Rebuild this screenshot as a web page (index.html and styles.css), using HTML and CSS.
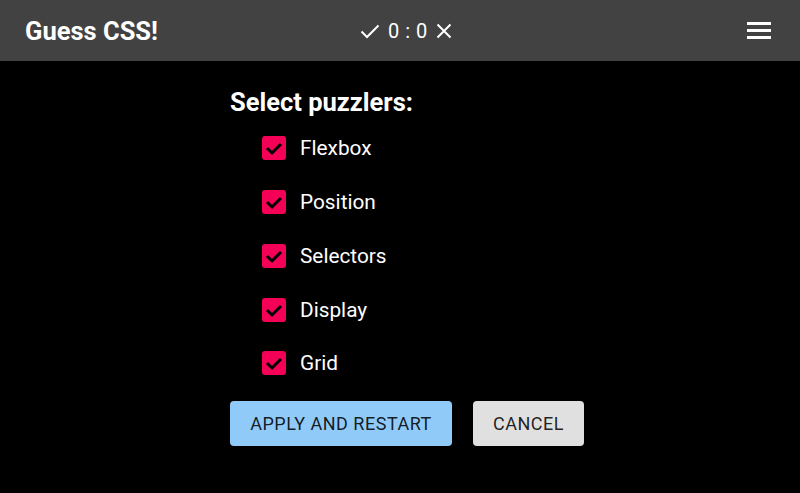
FILE: index.html
```html
<!DOCTYPE html>
<html>
<head>
<meta charset="utf-8">
<link rel="stylesheet" href="styles.css">
</head>
<body>
<header class="bar">
  <div class="title">Guess CSS!</div>
  <div class="score">
    <svg class="ico-check" width="20" height="16" viewBox="0 0 20 16"><path d="M1.5 8.5 L7 14 L18.5 2.5" fill="none" stroke="#fff" stroke-width="2"/></svg>
    <span class="score-text">0 : 0</span>
    <svg class="ico-x" width="16" height="16" viewBox="0 0 16 16"><path d="M1.5 1.5 L14.5 14.5 M14.5 1.5 L1.5 14.5" fill="none" stroke="#fff" stroke-width="2"/></svg>
  </div>
  <div class="menu">
    <span class="line"></span><span class="line"></span><span class="line"></span>
  </div>
</header>
<main class="content">
  <h2 class="heading">Select puzzlers:</h2>
  <ul class="list">
    <li class="item"><span class="box"><svg width="24" height="24" viewBox="0 0 24 24"><path d="M5 12 L10 17 L19 8" fill="none" stroke="#000" stroke-width="3"/></svg></span><span class="label">Flexbox</span></li>
    <li class="item"><span class="box"><svg width="24" height="24" viewBox="0 0 24 24"><path d="M5 12 L10 17 L19 8" fill="none" stroke="#000" stroke-width="3"/></svg></span><span class="label">Position</span></li>
    <li class="item"><span class="box"><svg width="24" height="24" viewBox="0 0 24 24"><path d="M5 12 L10 17 L19 8" fill="none" stroke="#000" stroke-width="3"/></svg></span><span class="label">Selectors</span></li>
    <li class="item"><span class="box"><svg width="24" height="24" viewBox="0 0 24 24"><path d="M5 12 L10 17 L19 8" fill="none" stroke="#000" stroke-width="3"/></svg></span><span class="label">Display</span></li>
    <li class="item"><span class="box"><svg width="24" height="24" viewBox="0 0 24 24"><path d="M5 12 L10 17 L19 8" fill="none" stroke="#000" stroke-width="3"/></svg></span><span class="label">Grid</span></li>
  </ul>
  <div class="actions">
    <button class="btn btn-primary">Apply and restart</button>
    <button class="btn btn-cancel">Cancel</button>
  </div>
</main>
</body>
</html>
```
FILE: styles.css
```css
html, body {
  margin: 0;
  padding: 0;
  background: #000;
  font-family: Roboto, "Liberation Sans", sans-serif;
  color: #fff;
}
.bar {
  height: 61px;
  background: #424242;
  display: flex;
  align-items: center;
  padding: 0 25px;
  position: relative;
}
.title {
  font-size: 25.5px;
  font-weight: 700;
  flex: 1;
}
.score {
  display: flex;
  align-items: center;
  gap: 8px;
  font-size: 20px;
  position: absolute;
  left: 360px;
  top: 19px;
}
.score-text {
  letter-spacing: 0.5px;
}
.menu {
  display: flex;
  flex-direction: column;
  gap: 4px;
  width: 24px;
  margin-right: 4px;
}
.line {
  display: block;
  height: 3px;
  background: #fff;
}
.content {
  padding-left: 230px;
  padding-top: 26px;
}
.heading {
  margin: 0;
  font-size: 25.5px;
  font-weight: 700;
  line-height: 30px;
}
.list {
  list-style: none;
  margin: 0;
  padding: 7px 0 0 32px;
  display: flex;
  flex-direction: column;
  gap: 6px;
}
.item {
  display: flex;
  align-items: center;
  height: 48px;
}
.item:last-child {
  height: 46px;
}
.box {
  width: 24px;
  height: 24px;
  background: #f50057;
  border-radius: 3px;
  display: flex;
  align-items: center;
  justify-content: center;
}
.label {
  margin-left: 14px;
  font-size: 20.8px;
}
.actions {
  display: flex;
  gap: 21px;
  margin-top: 15px;
}
.btn {
  font-family: Roboto, "Liberation Sans", sans-serif;
  font-size: 18px;
  font-weight: 400;
  text-transform: uppercase;
  letter-spacing: 0.5px;
  white-space: nowrap;
  color: rgba(0,0,0,0.87);
  border: none;
  border-radius: 4px;
  height: 45px;
  padding: 0;
}
.btn-primary {
  background: #90caf9;
  width: 222px;
}
.btn-cancel {
  background: #e0e0e0;
  width: 111px;
}
```
